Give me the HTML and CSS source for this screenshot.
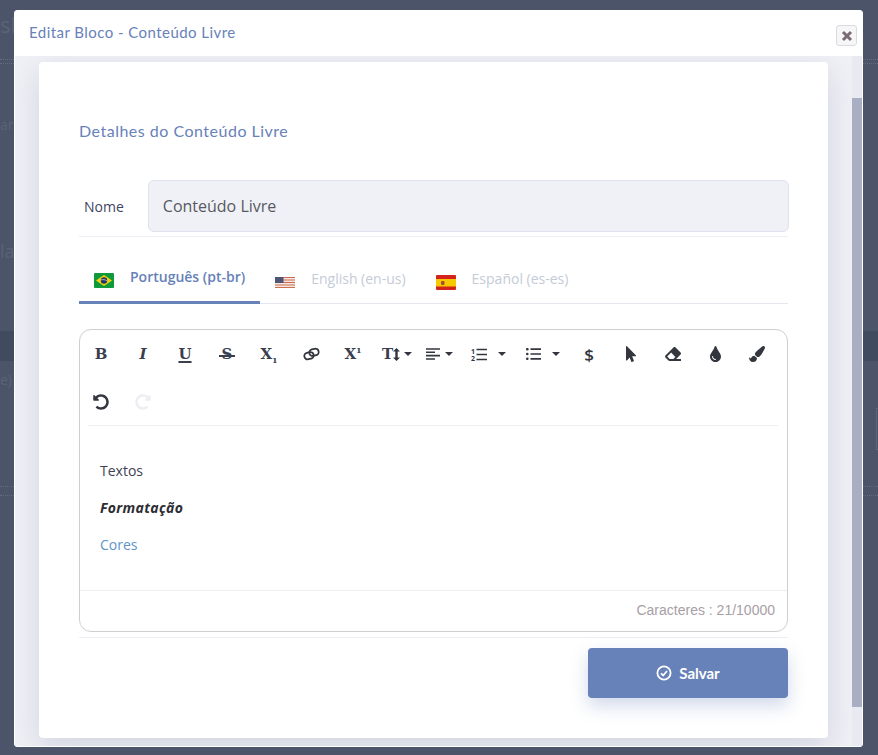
FILE: index.html
```html
<!DOCTYPE html>
<html lang="pt-br">
<head>
    <meta charset="UTF-8">
    <meta name="viewport" content="width=device-width, initial-scale=1.0">
    <link rel="stylesheet" href="styles.css">
    <title>Editar Bloco</title>
</head>
<body>
    <!-- Page behind the modal -->
    <div class="backdrop">
        <div class="ghost-title">sh</div>
        <div class="ghost-dots"></div>
        <div class="ghost-text ghost-text-a">aro</div>
        <div class="ghost-text ghost-text-b">las</div>
        <div class="ghost-band"></div>
        <div class="ghost-text ghost-text-c">e)</div>
        <div class="ghost-box"></div>
        <div class="ghost-dots ghost-dots-low"></div>
    </div>

    <!-- Modal -->
    <div class="modal">
        <div class="modal-header">
            <span class="modal-title">Editar Bloco - Conteúdo Livre</span>
            <button class="modal-close" type="button" aria-label="Fechar">
                <svg viewBox="0 0 12 12" width="12" height="12"><path d="M2 2l8 8M10 2l-8 8" fill="none" stroke="#7b6b74" stroke-width="3"/></svg>
            </button>
        </div>
        <div class="modal-body">
            <div class="modal-scroll">
                <div class="card">
                    <h3 class="card-title">Detalhes do Conteúdo Livre</h3>

                    <div class="field-row">
                        <label class="field-label">Nome</label>
                        <input class="field-input" type="text" value="Conteúdo Livre">
                    </div>

                    <!-- Language tabs -->
                    <div class="tabs">
                        <div class="tab tab-active">
                            <svg class="flag" viewBox="0 0 20 15"><rect width="20" height="15" rx="1" fill="#0f9b3c"/><path d="M10 2l8 5.5-8 5.5-8-5.5z" fill="#f5d20b"/><circle cx="10" cy="7.5" r="3.2" fill="#24346e"/><path d="M7 7c2-.8 4-.4 6 .8" stroke="#fff" stroke-width=".6" fill="none"/></svg>
                            <span>Português (pt-br)</span>
                        </div>
                        <div class="tab">
                            <svg class="flag" viewBox="0 0 20 15"><rect y="2" width="20" height="11" fill="#f3e6e0"/><path d="M0 2.5h20M0 5h20M0 7.5h20M0 10h20M0 12.5h20" stroke="#cf6f52" stroke-width="1.1"/><rect y="2" width="8.5" height="6" fill="#4f5573"/></svg>
                            <span>English (en-us)</span>
                        </div>
                        <div class="tab">
                            <svg class="flag" viewBox="0 0 20 15"><rect width="20" height="15" rx="1" fill="#d3231c"/><rect y="4" width="20" height="7.5" fill="#f7c900"/><rect x="5" y="6" width="3.5" height="4" rx="1" fill="#a8502d"/></svg>
                            <span>Español (es-es)</span>
                        </div>
                    </div>

                    <!-- Rich text editor -->
                    <div class="editor">
                        <div class="toolbar">
                            <button class="tool"><span class="glyph glyph-serif">B</span></button>
                            <button class="tool"><span class="glyph glyph-serif glyph-italic">I</span></button>
                            <button class="tool"><span class="glyph glyph-serif glyph-under">U</span></button>
                            <button class="tool"><span class="glyph glyph-serif glyph-strike">S</span></button>
                            <button class="tool"><span class="glyph glyph-serif">X<sub class="glyph-small">1</sub></span></button>
                            <button class="tool">
                                <svg class="ico" viewBox="0 0 18 14" width="17" height="14"><g fill="none" stroke="#33363f" stroke-width="1.9" transform="rotate(-14 9 7)"><rect x="1" y="4.6" width="10" height="7" rx="3.5"/><rect x="7" y="2.4" width="10" height="7" rx="3.5"/></g></svg>
                            </button>
                            <button class="tool"><span class="glyph glyph-serif">X<sup class="glyph-small">1</sup></span></button>
                            <button class="tool tool-left tool-size">
                                <span class="glyph glyph-serif">T</span>
                                <svg class="ico" viewBox="0 0 7 13" width="7" height="13"><path d="M3.5 0L7 3.6H4.7v5.8H7L3.5 13 0 9.4h2.3V3.6H0z" fill="#33363f"/></svg>
                                <i class="caret caret-near"></i>
                            </button>
                            <button class="tool tool-left">
                                <svg class="ico" viewBox="0 0 14 12" width="14" height="12"><path d="M0 1h14M0 4.3h9M0 7.6h14M0 11h9" stroke="#33363f" stroke-width="1.6"/></svg><i class="caret"></i>
                            </button>
                            <button class="tool tool-list">
                                <svg class="ico" viewBox="0 0 16 13" width="16" height="13"><text x="0" y="5.5" class="num">1</text><text x="0" y="13" class="num">2</text><path d="M5.5 1.5H16M5.5 6.5H16M5.5 11.5H16" stroke="#33363f" stroke-width="1.7"/></svg><i class="caret caret-far"></i>
                            </button>
                            <button class="tool tool-list">
                                <svg class="ico" viewBox="0 0 15 12" width="15" height="12"><path d="M4.5 1.2H15M4.5 6H15M4.5 10.8H15" stroke="#33363f" stroke-width="1.7"/><circle cx="1.3" cy="1.2" r="1.3" fill="#33363f"/><circle cx="1.3" cy="6" r="1.3" fill="#33363f"/><circle cx="1.3" cy="10.8" r="1.3" fill="#33363f"/></svg><i class="caret caret-far"></i>
                            </button>
                            <button class="tool"><span class="glyph glyph-sans">$</span></button>
                            <button class="tool">
                                <svg class="ico" viewBox="0 0 320 512" width="10" height="16"><path fill="#33363f" d="M302.189 329.126H196.105l55.831 135.993c3.889 9.428-.555 19.999-9.444 23.999l-49.165 21.427c-9.165 4-19.443-.571-23.332-9.714l-53.053-129.136-86.664 89.138C18.729 472.71 0 463.554 0 447.977V18.299C0 1.899 19.921-6.096 30.277 5.443l284.412 292.542c11.472 11.179 3.007 31.141-12.5 31.141z"/></svg>
                            </button>
                            <button class="tool">
                                <svg class="ico" viewBox="0 0 512 512" width="16" height="16"><path fill="#33363f" d="M497.941 273.941c18.745-18.745 18.745-49.137 0-67.882l-160-160c-18.745-18.745-49.136-18.746-67.883 0l-256 256c-18.745 18.745-18.745 49.137 0 67.882l96 96A48.004 48.004 0 0 0 144 480h356c6.627 0 12-5.373 12-12v-40c0-6.627-5.373-12-12-12H355.883l142.058-142.059zm-302.627-62.627l137.373 137.373L265.373 416H150.628l-80-80 124.686-124.686z"/></svg>
                            </button>
                            <button class="tool">
                                <svg class="ico" viewBox="0 0 352 512" width="11" height="16"><path fill="#33363f" d="M205.22 22.09c-7.94-28.78-49.44-30.12-58.44 0C100.01 179.85 0 222.72 0 333.91 0 432.35 78.72 512 176 512s176-79.65 176-178.09c0-111.75-99.79-153.34-146.78-311.82zM176 448c-61.75 0-112-50.25-112-112 0-8.84 7.16-16 16-16s16 7.16 16 16c0 44.11 35.89 80 80 80 8.84 0 16 7.16 16 16s-7.16 16-16 16z"/></svg>
                            </button>
                            <button class="tool">
                                <svg class="ico" viewBox="0 0 512 512" width="16" height="16"><path fill="#33363f" d="M167.02 309.34c-40.12 2.58-76.53 17.86-97.19 72.3-2.35 6.21-8 9.98-14.59 9.98-11.11 0-45.46-27.67-55.25-34.35C0 439.62 37.93 512 128 512c75.86 0 128-43.77 128-120.19 0-3.11-.65-6.08-.97-9.13l-88.01-73.34zM457.89 0c-15.16 0-29.37 6.71-40.21 16.45C213.27 199.05 192 203.34 192 257.09c0 13.7 3.25 26.76 8.73 38.7l63.82 53.18c7.21 1.8 14.64 3.03 22.39 3.03 62.11 0 98.11-45.47 211.16-256.46 7.38-14.35 13.9-29.85 13.9-45.99C512 20.64 486 0 457.89 0z"/></svg>
                            </button>
                            <button class="tool">
                                <svg class="ico" viewBox="0 0 512 512" width="16" height="16"><path fill="#33363f" d="M255.545 8c-66.269.119-126.438 26.233-170.86 68.685L48.971 40.971C33.851 25.851 8 36.559 8 57.941V192c0 13.255 10.745 24 24 24h134.059c21.382 0 32.09-25.851 16.971-40.971l-41.75-41.75c30.864-28.899 70.801-44.907 113.23-45.273 92.398-.798 170.283 73.977 169.484 169.442C423.236 348.009 349.816 424 256 424c-41.127 0-79.997-14.678-110.63-41.556-4.743-4.161-11.906-3.908-16.368.553L89.34 422.659c-4.872 4.872-4.631 12.815.482 17.433C133.798 479.813 192.074 504 256 504c136.966 0 247.999-111.033 248-247.998C504.001 119.193 392.354 7.755 255.545 8z"/></svg>
                            </button>
                            <button class="tool">
                                <svg class="ico ico-redo" viewBox="0 0 512 512" width="16" height="16"><path fill="#eceef2" d="M255.545 8c-66.269.119-126.438 26.233-170.86 68.685L48.971 40.971C33.851 25.851 8 36.559 8 57.941V192c0 13.255 10.745 24 24 24h134.059c21.382 0 32.09-25.851 16.971-40.971l-41.75-41.75c30.864-28.899 70.801-44.907 113.23-45.273 92.398-.798 170.283 73.977 169.484 169.442C423.236 348.009 349.816 424 256 424c-41.127 0-79.997-14.678-110.63-41.556-4.743-4.161-11.906-3.908-16.368.553L89.34 422.659c-4.872 4.872-4.631 12.815.482 17.433C133.798 479.813 192.074 504 256 504c136.966 0 247.999-111.033 248-247.998C504.001 119.193 392.354 7.755 255.545 8z"/></svg>
                            </button>
                        </div>

                        <div class="editor-content">
                            <p>Textos</p>
                            <p class="text-strong">Formatação</p>
                            <p class="text-blue">Cores</p>
                        </div>

                        <div class="editor-footer">Caracteres : 21/10000</div>
                    </div>

                    <div class="actions">
                        <button class="btn-save" type="button">
                            <svg viewBox="0 0 16 16" width="16" height="16"><circle cx="8" cy="8" r="6.6" fill="none" stroke="#fff" stroke-width="1.8"/><path d="M5 8.3l2.2 2.2L11 6" fill="none" stroke="#fff" stroke-width="1.8"/></svg>
                            Salvar
                        </button>
                    </div>
                </div>
            </div>

            <!-- Scrollbar -->
            <div class="scrollbar"><div class="scrollbar-thumb"></div></div>
        </div>
    </div>
</body>
</html>
```

FILE: styles.css
```css
/* Body styling */
body {
    margin: 0;
    height: 755px;
    overflow: hidden;
    background-color: #4b5468;
    font-family: 'Open Sans', sans-serif;
    color: #3f4254;
}

/* Page behind the modal */
.backdrop {
    color: #5b6376;
}

.ghost-title {
    padding-top: 9px;
    font-size: 22px;
    line-height: 30px;
}

.ghost-dots {
    margin-top: 20px;
    border-top: 1px dotted #636b7e;
    border-bottom: 1px dotted #636b7e;
    height: 3px;
}

.ghost-dots-low {
    margin-top: 36px;
    height: 8px;
}

.ghost-text {
    font-size: 14px;
    line-height: 20px;
}

.ghost-text-a {
    margin-top: 51px;
}

.ghost-text-b {
    margin-top: 106px;
    font-size: 18px;
}

.ghost-text-c {
    margin-top: 9px;
}

.ghost-band {
    margin-top: 70px;
    height: 30px;
    background-color: #414b60;
}

.ghost-box {
    height: 40px;
    margin: 18px 0 0 876px;
    border-left: 1px solid #5d6578;
    border-top: 1px solid #5d6578;
    border-bottom: 1px solid #5d6578;
}

/* Modal */
.modal {
    position: absolute;
    top: 10px;
    left: 14px;
    width: 847px;
    height: 735px;
    display: flex;
    flex-direction: column;
    background-color: #fff;
    border: 1px solid #fff;
    border-radius: 3px;
}

.modal-header {
    height: 45px;
    flex-shrink: 0;
    display: flex;
    align-items: center;
    justify-content: space-between;
    padding: 0 5px 4px 14px;
    box-sizing: border-box;
}

.modal-title {
    font-family: Lato, sans-serif;
    font-size: 15px;
    letter-spacing: 0.45px;
    color: #6781b9;
}

.modal-close {
    width: 21px;
    height: 21px;
    margin-top: 8px;
    padding: 0;
    display: flex;
    align-items: center;
    justify-content: center;
    background-color: #f6f6f9;
    border: 1px solid #d9dae2;
    border-radius: 3px;
}

.modal-body {
    flex: 1;
    min-height: 0;
    display: flex;
    background-color: #f0f1f6;
}

.modal-scroll {
    flex: 1;
    padding: 6px 24px 0;
    overflow: hidden;
}

/* Scrollbar */
.scrollbar {
    width: 10px;
    background-color: #e9eaf1;
}

.scrollbar-thumb {
    height: 609px;
    margin-top: 42px;
    background-color: #a9aec3;
}

/* Card */
.card {
    box-sizing: border-box;
    width: 789px;
    height: 676px;
    padding: 59px 40px 0;
    background-color: #fff;
    border-radius: 4px;
    box-shadow: 0 10px 30px rgba(120, 125, 160, 0.25);
}

.card-title {
    margin: 0;
    font-family: Lato, sans-serif;
    font-size: 16px;
    font-weight: 400;
    line-height: 20px;
    letter-spacing: 0.5px;
    color: #6781b9;
}

/* Name field */
.field-row {
    display: flex;
    align-items: center;
    gap: 24px;
    margin-top: 39px;
    padding: 0 0 4px 5px;
    border-bottom: 1px solid #eceef4;
}

.field-label {
    font-size: 14px;
    color: #3f4463;
}

.field-input {
    flex: 1;
    box-sizing: border-box;
    height: 52px;
    margin-right: -1px;
    padding: 0 14px;
    background-color: #f0f1f6;
    border: 1px solid #dfe2ee;
    border-radius: 6px;
    font-family: 'Open Sans', sans-serif;
    font-size: 16px;
    color: #575962;
    outline: none;
}

/* Language tabs */
.tabs {
    display: flex;
    height: 66px;
    margin-bottom: 25px;
    border-bottom: 1px solid #e4e6f1;
}

.tab {
    box-sizing: border-box;
    height: 67px;
    display: flex;
    align-items: center;
    gap: 16px;
    padding: 28px 15px 13px;
    font-size: 14px;
    color: #c5cbd7;
}

.tab-active {
    color: #6781b9;
    font-weight: 600;
    border-bottom: 3px solid #6781b9;
}

.flag {
    width: 20px;
    height: 15px;
    flex-shrink: 0;
    margin-top: 8px;
}

/* Rich text editor */
.editor {
    box-sizing: border-box;
    height: 303px;
    display: flex;
    flex-direction: column;
    border: 1px solid #cfcfd3;
    border-radius: 12px;
}

.toolbar {
    display: flex;
    flex-wrap: wrap;
    padding-right: 8px;
    position: relative;
}

.toolbar::after {
    content: "";
    position: absolute;
    left: 8px;
    right: 9px;
    bottom: 0;
    border-bottom: 1px solid #eceef0;
}

.tool {
    width: 42px;
    height: 48px;
    padding: 0;
    display: flex;
    align-items: center;
    justify-content: center;
    background: none;
    border: none;
    color: #33363f;
}

.tool-left {
    justify-content: flex-start;
    padding-left: 10px;
    gap: 5px;
}

.tool-size {
    padding-left: 8px;
    gap: 0;
}

.tool-list {
    width: 55px;
    justify-content: flex-start;
    padding-left: 13px;
}

.glyph {
    line-height: 1;
}

.glyph-serif {
    position: relative;
    font-family: 'DejaVu Serif', serif;
    font-size: 15px;
    font-weight: 700;
    color: #3a3f4f;
}

.glyph-italic {
    font-style: italic;
}

.glyph-under {
    text-decoration: underline;
    text-decoration-thickness: 2px;
    text-underline-offset: 2px;
}

/* strike line runs wider than the letter */
.glyph-strike::after {
    content: "";
    position: absolute;
    left: -3px;
    right: -3px;
    top: 8px;
    height: 2px;
    background-color: #3a3f4f;
}

.glyph-small {
    font-size: 8px;
    line-height: 0;
}

.glyph-sans {
    font-family: 'Open Sans', sans-serif;
    font-size: 17px;
    font-weight: 600;
}

.caret {
    width: 0;
    height: 0;
    border-left: 4px solid transparent;
    border-right: 4px solid transparent;
    border-top: 4px solid #33363f;
}

.caret-near {
    margin-left: 4px;
}

.caret-far {
    margin-left: 11px;
}

.num {
    font-family: 'Open Sans', sans-serif;
    font-size: 7px;
    font-weight: 700;
    fill: #33363f;
}

.ico-redo {
    transform: scaleX(-1);
}

.editor-content {
    flex: 1;
    padding: 35px 20px 0;
    font-size: 14px;
    line-height: 20px;
    color: #3f4254;
}

.editor-content p {
    margin: 0 0 17px;
}

.text-strong {
    font-weight: 700;
    font-style: italic;
    letter-spacing: 0.35px;
    color: #2d2d33;
}

.text-blue {
    color: #5d94c8;
}

.editor-footer {
    height: 40px;
    padding-right: 12px;
    border-top: 1px solid #eceef0;
    font-family: 'Liberation Sans', sans-serif;
    font-size: 14px;
    line-height: 39px;
    text-align: right;
    color: #a89ea6;
}

/* Footer with save button */
.actions {
    display: flex;
    justify-content: flex-end;
    margin-top: 5px;
    padding-top: 10px;
    border-top: 1px solid #eceef4;
}

.btn-save {
    width: 200px;
    height: 50px;
    display: flex;
    align-items: center;
    justify-content: center;
    gap: 7px;
    background-color: #6781b9;
    border: none;
    border-radius: 4px;
    box-shadow: 0 8px 18px rgba(103, 129, 185, 0.3);
    font-family: Lato, sans-serif;
    font-size: 15px;
    font-weight: 700;
    color: #fff;
}
```
